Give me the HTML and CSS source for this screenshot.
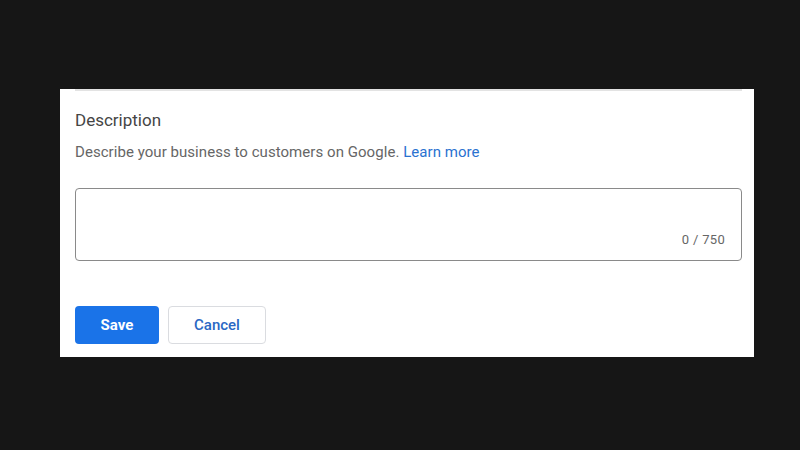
FILE: index.html
```html
<!DOCTYPE html>
<html lang="en">
<head>
  <meta charset="UTF-8" />
  <meta name="viewport" content="width=device-width, initial-scale=1.0"/>
  <title>Business Description</title>
  <link rel="stylesheet" href="styles.css">
</head>
<body>
  <section class="panel">
    <div class="divider"></div>
    <h2>Description</h2>
    <p class="hint">Describe your business to customers on Google. <a href="#">Learn more</a></p>

    <div class="field">
      <textarea id="description" name="description" maxlength="750"></textarea>
      <div class="counter">0 / 750</div>
    </div>

    <div class="actions">
      <button type="button" class="btn-save">Save</button>
      <button type="button" class="btn-cancel">Cancel</button>
    </div>
  </section>
</body>
</html>
```

FILE: styles.css
```css
* { margin: 0; padding: 0; box-sizing: border-box; }
body {
  font-family: Roboto, 'Liberation Sans', sans-serif;
  background: #161616;
  padding: 88px 0 0 60px;
  height: 450px;
  overflow: hidden;
}
.panel {
  background: #fff;
  width: 694px;
  height: 268px;
  padding: 0 12px 0 15px;
}
.divider {
  height: 2px;
  margin-top: 1px;
  background: #e3e3e3;
}
.panel h2 {
  font-size: 17px;
  font-weight: 400;
  line-height: 24px;
  color: #454545;
  margin-top: 17px;
}
.hint {
  font-size: 15px;
  line-height: 20px;
  color: #666;
  margin-top: 10px;
  letter-spacing: 0.05px;
}
.hint a {
  color: #2a72d0;
  text-decoration: none;
}
.field {
  margin-top: 26px;
  height: 73px;
  border: 1px solid #8a8a8a;
  border-radius: 4px;
  display: flex;
  flex-direction: column;
}
.field textarea {
  flex: 1;
  border: none;
  outline: none;
  resize: none;
  background: transparent;
  border-radius: 4px;
  padding: 12px 16px 0;
  font-family: inherit;
  font-size: 14px;
}
.counter {
  text-align: right;
  font-size: 13px;
  line-height: 16px;
  color: #666;
  padding: 0 16px 12px;
  letter-spacing: 0.3px;
}
.actions {
  display: flex;
  gap: 9px;
  margin-top: 45px;
}
.actions button {
  height: 38px;
  border-radius: 4px;
  font-family: inherit;
  font-size: 15px;
  cursor: pointer;
}
.btn-save {
  width: 84px;
  background: #1a73e8;
  color: #fff;
  border: none;
  font-weight: 700;
}
.btn-cancel {
  width: 98px;
  background: #fff;
  color: #2a68c4;
  border: 1px solid #dadce0;
  font-weight: 500;
}
```
